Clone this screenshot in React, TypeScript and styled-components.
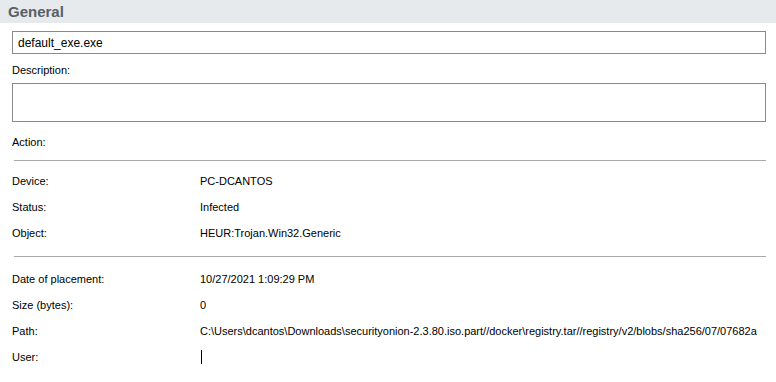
import React from 'react'
import styled, { createGlobalStyle } from 'styled-components'

const GlobalStyle = createGlobalStyle`
  body {
    margin: 0;
    background: #ffffff;
    font-family: Tahoma, "DejaVu Sans", "Liberation Sans", sans-serif;
  }
`

const Page = styled.div`
  width: 776px;
  height: 382px;
  overflow: hidden;
  background: #ffffff;
  color: #000000;
  font-size: 11px;
  font-family: Tahoma, "Liberation Sans", sans-serif;
`

const Header = styled.div`
  height: 23px;
  background: #e6eaed;
  padding-left: 8px;
  display: flex;
  align-items: center;
`

const HeaderTitle = styled.span`
  font-family: "Liberation Sans", Arial, sans-serif;
  font-size: 15px;
  font-weight: bold;
  color: #586067;
`

const Body = styled.div`
  padding: 8px 10px 0 12px;
  display: flex;
  flex-direction: column;
`

const Field = styled.div<{ $height: number }>`
  height: ${({ $height }) => $height}px;
  box-sizing: border-box;
  border: 1px solid #8a8a8a;
  padding: 2px 5px;
  display: flex;
  align-items: ${({ $height }) => ($height > 30 ? 'flex-start' : 'center')};
  font-size: 12px;
`

const Label = styled.div<{ $top?: number }>`
  height: 26px;
  margin-top: ${({ $top }) => $top ?? 0}px;
  display: flex;
  align-items: center;
`

const Divider = styled.hr<{ $top: number; $bottom: number }>`
  border: none;
  border-top: 1px solid #a9a9a9;
  margin: ${({ $top, $bottom }) => `${$top}px 0 ${$bottom}px 2px`};
`

const Row = styled.div`
  height: 26px;
  display: grid;
  grid-template-columns: 188px 1fr;
  align-items: center;
  white-space: nowrap;
  overflow: hidden;
`

const Value = styled.span`
  white-space: nowrap;
`

const Caret = styled.span`
  display: inline-block;
  width: 1px;
  height: 14px;
  margin-left: 1px;
  background: #000000;
  vertical-align: middle;
`

const deviceRows = [
  ['Device:', 'PC-DCANTOS'],
  ['Status:', 'Infected'],
  ['Object:', 'HEUR:Trojan.Win32.Generic'],
]

const fileRows = [
  ['Date of placement:', '10/27/2021 1:09:29 PM'],
  ['Size (bytes):', '0'],
  [
    'Path:',
    'C:\\Users\\dcantos\\Downloads\\securityonion-2.3.80.iso.part//docker\\registry.tar//registry/v2/blobs/sha256/07/07682a',
  ],
]

const App = () => {
  return (
    <Page>
      <GlobalStyle />
      <Header>
        <HeaderTitle>General</HeaderTitle>
      </Header>
      <Body>
        <Field $height={23}>default_exe.exe</Field>
        <Label $top={3}>Description:</Label>
        <Field $height={39} />
        <Label $top={7}>Action:</Label>
        <Divider $top={5} $bottom={7} />
        {deviceRows.map(([label, value]) => (
          <Row key={label}>
            <span>{label}</span>
            <Value>{value}</Value>
          </Row>
        ))}
        <Divider $top={10} $bottom={9} />
        {fileRows.map(([label, value]) => (
          <Row key={label}>
            <span>{label}</span>
            <Value>{value}</Value>
          </Row>
        ))}
        <Row>
          <span>User:</span>
          <span>
            <Caret />
          </span>
        </Row>
      </Body>
    </Page>
  )
}

export default App
